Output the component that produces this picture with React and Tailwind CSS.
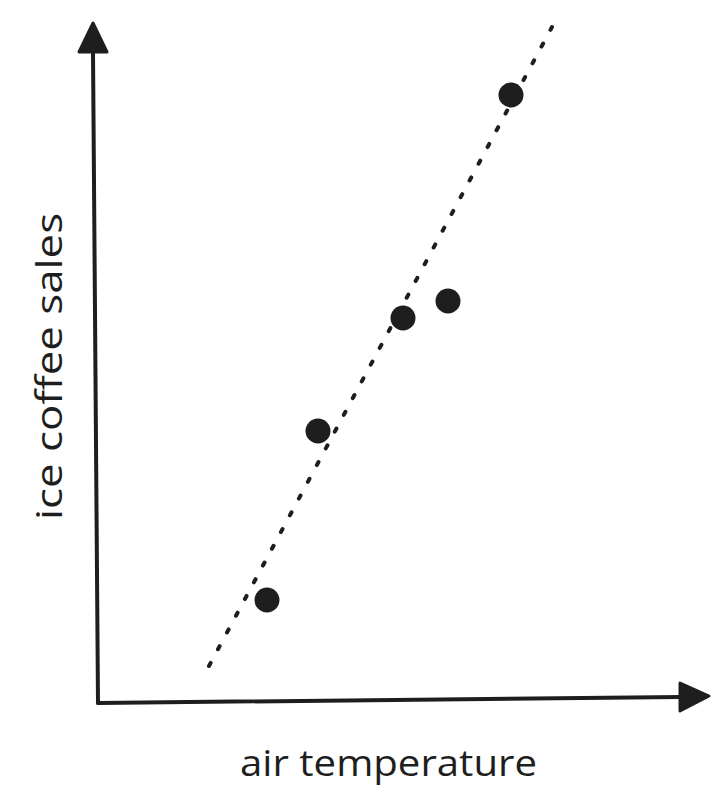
import React from "react";

const INK = "#1e1e1e";

const points = [
    [511, 95],
    [448, 301],
    [403, 318],
    [318, 431],
    [267, 600],
];

const ScatterSketch = () => {
    return (
        <svg width="727" height="807" viewBox="0 0 727 807" className="block">
            {/* y axis + head */}
            <path d="M98 703 L93 52" stroke={INK} strokeWidth="4" strokeLinecap="round" fill="none" />
            <path d="M93 23 L79 52 L107 52 Z" fill={INK} stroke={INK} strokeWidth="3" strokeLinejoin="round" />

            {/* x axis + head */}
            <path d="M98 703 L681 697" stroke={INK} strokeWidth="4" strokeLinecap="round" fill="none" />
            <path d="M709 696 L680 683 L680 711 Z" fill={INK} stroke={INK} strokeWidth="3" strokeLinejoin="round" />

            {/* trend line */}
            <path
                d="M209 666 L552 27"
                stroke={INK}
                strokeWidth="4"
                strokeLinecap="round"
                strokeDasharray="3.5 15.5"
                fill="none"
            />

            {points.map(([cx, cy], i) => (
                <circle key={i} cx={cx} cy={cy} r="12.5" fill={INK} />
            ))}

            <text
                x="240"
                y="776"
                textLength="297"
                lengthAdjust="spacingAndGlyphs"
                fill={INK}
                className="font-['Open_Sans','Noto_Sans',sans-serif] text-[36px] font-medium"
            >
                air temperature
            </text>
            <text
                transform="translate(62 520) rotate(-90)"
                textLength="307"
                lengthAdjust="spacingAndGlyphs"
                fill={INK}
                className="font-['Open_Sans','Noto_Sans',sans-serif] text-[36px] font-medium"
            >
                ice coffee sales
            </text>
        </svg>
    );
};

export default function App() {
    return (
        <div className="w-[727px] h-[807px] bg-white overflow-hidden">
            <ScatterSketch />
        </div>
    );
}
